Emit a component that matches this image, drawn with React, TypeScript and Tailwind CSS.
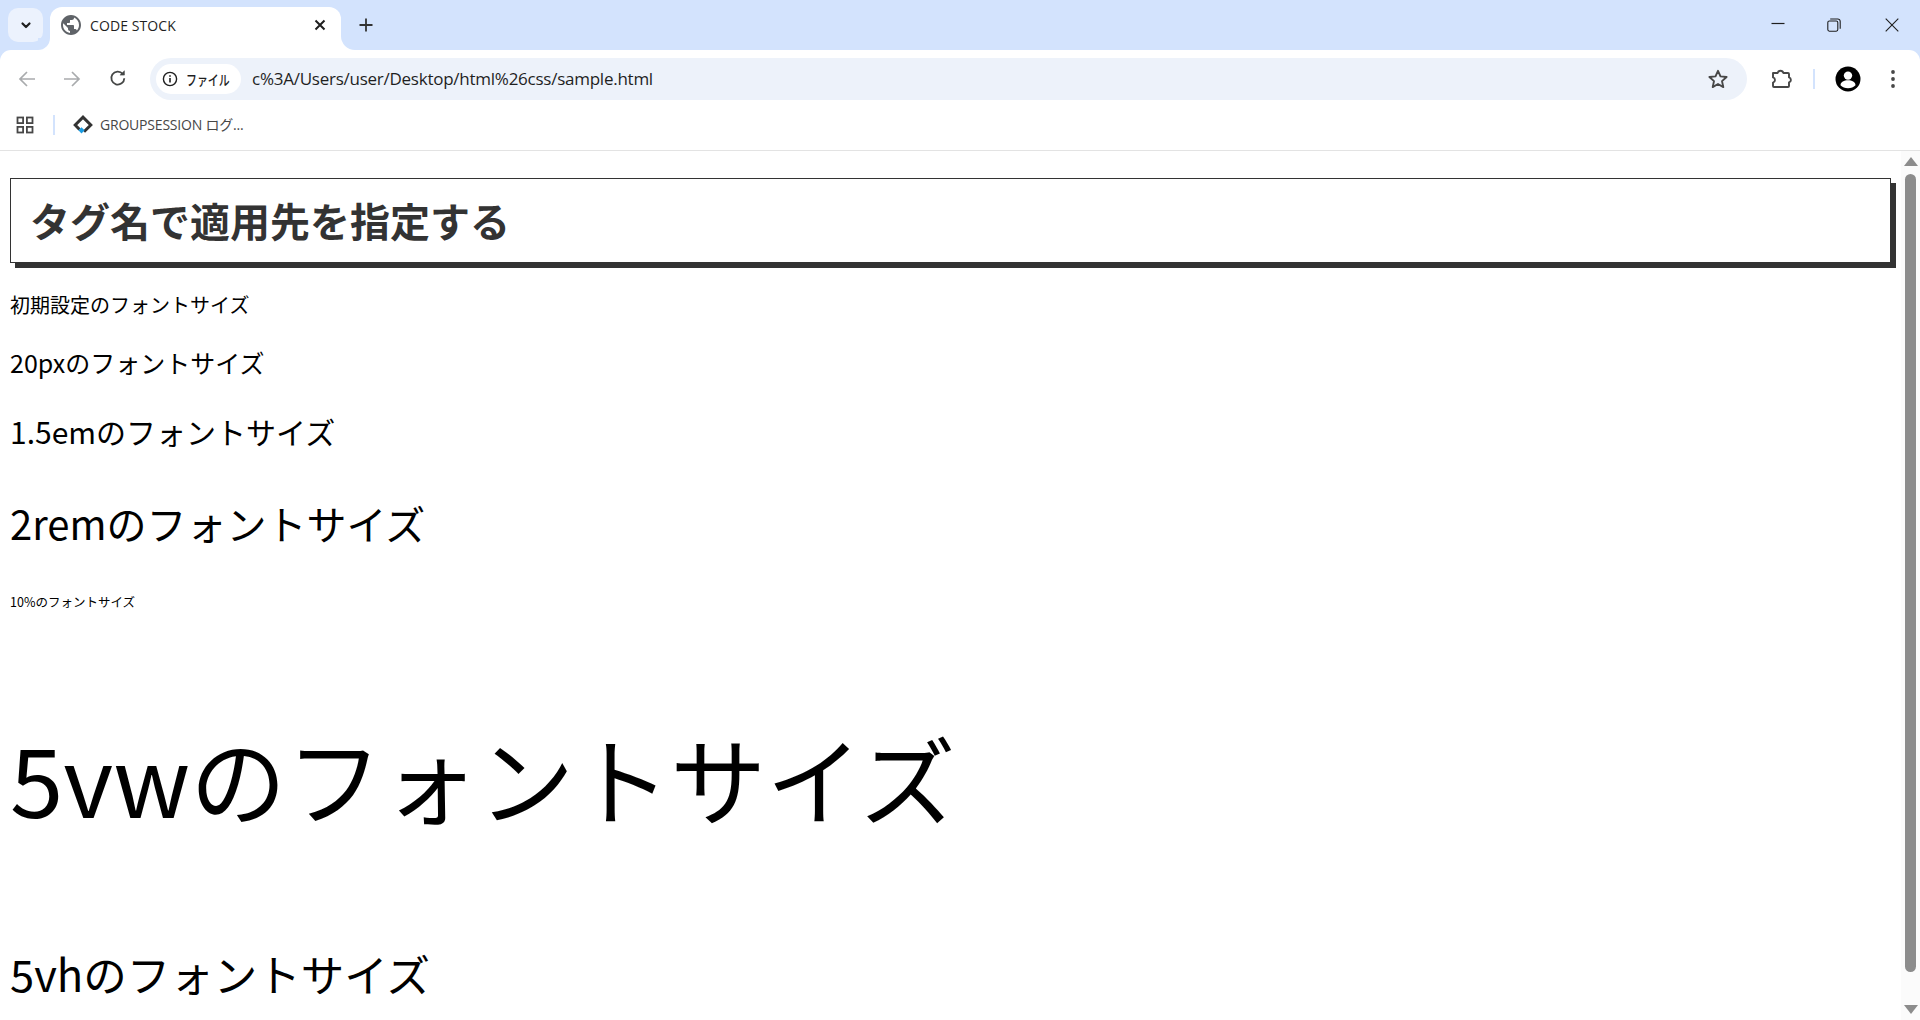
import { MdPublic } from "react-icons/md";

const ui = "font-['Noto_Sans','Noto_Sans_CJK_JP',sans-serif]";

function Chevron() {
  return (
    <svg width="14" height="14" viewBox="0 0 14 14" fill="none" stroke="#1f1f1f" strokeWidth="2.2" strokeLinecap="round" strokeLinejoin="round">
      <path d="M3.5 5.5 7 9l3.5-3.5" />
    </svg>
  );
}

function Arrow({ flip, color }: { flip?: boolean; color: string }) {
  return (
    <svg width="20" height="20" viewBox="0 0 20 20" fill="none" stroke={color} strokeWidth="1.7" className={flip ? "-scale-x-100" : ""}>
      <path d="M18 10H3M10 3l-7 7 7 7" />
    </svg>
  );
}

function App() {
  return (
    <div className="w-[1920px] h-[1020px] overflow-hidden bg-white flex flex-col">
      {/* tab strip */}
      <div className={`h-[50px] shrink-0 bg-[#d3e3fd] flex items-start pl-[8px] ${ui}`}>
        <div className="mt-[8px] w-[35px] h-[34px] rounded-[10px] bg-[#ecf2fd] flex items-center justify-center">
          <Chevron />
        </div>
        <div className="relative mt-[7px] ml-[7px] w-[291px] h-[43px] bg-white rounded-t-[12px] flex items-center pl-[9px] pr-[14px] pb-[7px]">
          <span className="absolute left-[-12px] bottom-0 w-[12px] h-[12px] bg-white">
            <span className="block w-full h-full bg-[#d3e3fd] rounded-br-[12px]" />
          </span>
          <span className="absolute right-[-14px] bottom-0 w-[14px] h-[14px] bg-white">
            <span className="block w-full h-full bg-[#d3e3fd] rounded-bl-[14px]" />
          </span>
          <MdPublic size={24} color="#5f6368" />
          <span className="ml-[7px] text-[14px] text-[#1f1f1f] font-['Open_Sans',sans-serif] tracking-[0.1px]">CODE STOCK</span>
          <svg className="ml-auto" width="14" height="14" viewBox="0 0 14 14" fill="none" stroke="#1f1f1f" strokeWidth="2">
            <path d="M2.5 2.5l9 9M11.5 2.5l-9 9" />
          </svg>
        </div>
        <div className="mt-[16px] ml-[16px]">
          <svg width="18" height="18" viewBox="0 0 18 18" fill="none" stroke="#333" strokeWidth="1.8">
            <path d="M9 2.5v13M2.5 9h13" />
          </svg>
        </div>
        <div className="ml-auto flex items-start">
          <svg className="mt-[18px]" width="14" height="14" viewBox="0 0 14 14" fill="none" stroke="#1f1f1f" strokeWidth="1.2">
            <path d="M0.5 5.5h13" />
          </svg>
          <svg className="mt-[18px] ml-[42px]" width="14" height="14" viewBox="0 0 14 14" fill="none" stroke="#1f1f1f" strokeWidth="1.1">
            <rect x="0.8" y="3" width="10" height="10.2" rx="1.6" />
            <path d="M3.2 1h7.6a2.4 2.4 0 0 1 2.4 2.4v7.4" />
          </svg>
          <svg className="mt-[18px] ml-[44px] mr-[21px]" width="14" height="14" viewBox="0 0 14 14" fill="none" stroke="#1f1f1f" strokeWidth="1.1">
            <path d="M0.7 0.7l12.6 12.6M13.3 0.7 0.7 13.3" />
          </svg>
        </div>
      </div>

      {/* toolbar */}
      <div className={`h-[50px] shrink-0 bg-[#d3e3fd] ${ui}`}>
        <div className="h-full bg-white rounded-t-[11px] flex items-start">
          <div className="w-[54px] h-full flex items-center justify-center pt-[7px]">
            <Arrow color="#a9abad" />
          </div>
          <div className="w-[35px] h-full flex items-center justify-center pt-[7px]">
            <Arrow flip color="#a9abad" />
          </div>
          <div className="w-[57px] h-full flex items-center justify-center pt-[6px] pl-[1px]">
            <svg width="20" height="20" viewBox="0 0 20 20" fill="none" stroke="#454746" strokeWidth="1.8">
              <path d="M16.3 10.2a6.5 6.5 0 1 1-1.6-4.4" />
              <path d="M16.4 2.6v4.5h-4.5" fill="#454746" strokeWidth="0.6" />
            </svg>
          </div>
          <div className="ml-[4px] mt-[8px] w-[1597px] h-[42px] rounded-full bg-[#edf2fa] flex items-center pl-[6px] pr-[18px]">
            <div className="h-[30px] w-[85px] rounded-full bg-white flex items-center pl-[6px]">
              <svg className="shrink-0" width="16" height="16" viewBox="0 0 16 16" fill="none" stroke="#1f1f1f" strokeWidth="1.4">
                <circle cx="8" cy="8" r="6.6" />
                <path d="M8 7v4.4" strokeWidth="1.6" />
                <path d="M8 4.2v1.6" strokeWidth="1.6" />
              </svg>
              <span className="ml-[8px] w-[44px] shrink-0 inline-block origin-left scale-x-[0.78] text-[14px] text-[#1f1f1f] font-['Noto_Sans_CJK_JP',sans-serif] font-medium whitespace-nowrap">ファイル</span>
            </div>
            <span className="ml-[11px] text-[17px] text-[#1f1f1f] font-['Open_Sans',sans-serif] tracking-[-0.25px]">c%3A/Users/user/Desktop/html%26css/sample.html</span>
            <svg className="ml-auto" width="22" height="22" viewBox="0 0 22 22" fill="none" stroke="#474747" strokeWidth="1.9" strokeLinejoin="round">
              <path d="M11 2.8l2.5 5.6 6.1.6-4.6 4.1 1.3 6-5.3-3.1-5.3 3.1 1.3-6L2.4 9l6.1-.6z" />
            </svg>
          </div>
          <div className="h-full w-[173px] flex items-center pt-[7px]">
            <svg className="ml-[23px]" width="22" height="22" viewBox="0 0 22 22" fill="none" stroke="#474747" strokeWidth="1.9" strokeLinejoin="round">
              <path d="M3 5h4.6a3 3 0 0 1 5.8 0H18a1 1 0 0 1 1 1v3.4a2.6 2.6 0 0 1 0 5V18a1 1 0 0 1-1 1H4a1 1 0 0 1-1-1v-3.4a2.7 2.7 0 0 0 0-5.2z" />
            </svg>
            <span className="ml-[21px] w-[2px] h-[20px] bg-[#d3e3fd]" />
            <svg className="ml-[20px]" width="26" height="26" viewBox="0 0 26 26">
              <circle cx="13" cy="13" r="12.5" fill="#000" />
              <circle cx="13" cy="9.6" r="4.2" fill="#fff" />
              <path d="M5.5 19.2c0-3.4 3.6-5 7.5-5s7.5 1.6 7.5 5c-1.8 2-4.5 3-7.5 3s-5.7-1-7.5-3z" fill="#fff" />
            </svg>
            <svg className="ml-[29px]" width="6" height="20" viewBox="0 0 6 20" fill="#474747">
              <circle cx="3" cy="3" r="1.9" />
              <circle cx="3" cy="10" r="1.9" />
              <circle cx="3" cy="17" r="1.9" />
            </svg>
          </div>
        </div>
      </div>

      {/* bookmarks */}
      <div className={`h-[51px] shrink-0 bg-white border-b border-[#e3e3e3] flex items-center pl-[16px] pb-[1px] ${ui}`}>
        <svg width="18" height="18" viewBox="0 0 18 18" fill="none" stroke="#474747" strokeWidth="1.8">
          <rect x="1.5" y="1.5" width="5.6" height="5.6" />
          <rect x="10.9" y="1.5" width="5.6" height="5.6" />
          <rect x="1.5" y="10.9" width="5.6" height="5.6" />
          <rect x="10.9" y="10.9" width="5.6" height="5.6" />
        </svg>
        <span className="ml-[19px] w-[2px] h-[20px] bg-[#d3e3fd]" />
        <svg className="ml-[18px]" width="20" height="20" viewBox="0 0 20 20" fill="none">
          <path d="M6.5 14.5 2.2 10 10 2.2 17.8 10 11 16.8" stroke="#333" strokeWidth="3" />
          <path d="M8.5 12.2 11.6 15.3 8.5 18.4 5.4 15.3z" fill="#1a9be0" />
        </svg>
        <span className="ml-[7px] text-[14px] text-[#474747] font-['Open_Sans','Noto_Sans_CJK_JP',sans-serif] tracking-[-0.2px]">GROUPSESSION ログ...</span>
      </div>

      {/* page */}
      <div className="flex-1 min-h-0 flex font-['Noto_Sans_CJK_JP',sans-serif] text-black leading-[1.448]">
        <div className="flex-1 min-w-0 px-[10px] overflow-hidden">
          <h1 className="mt-[27px] mb-[28px] border border-[#333] shadow-[5px_5px_0_#333] pl-[19px] py-[12.5px] text-[40px] font-bold text-[#333]">タグ名で適用先を指定する</h1>
          <p className="text-[20px] mb-[24px]">初期設定のフォントサイズ</p>
          <p className="text-[25px] mb-[30px]">20pxのフォントサイズ</p>
          <p className="text-[30px] mb-[42px]">1.5emのフォントサイズ</p>
          <p className="text-[40px] mb-[40px]">2remのフォントサイズ</p>
          <p className="text-[12.5px] mb-[96px]">10%のフォントサイズ</p>
          <p className="text-[96px] mb-[96px]">5vwのフォントサイズ</p>
          <p className="text-[43.5px]">5vhのフォントサイズ</p>
        </div>
        <div className="w-[19px] shrink-0 bg-[#fbfbfb] flex flex-col items-center pt-[6px] pb-[6px]">
          <svg width="14" height="9" viewBox="0 0 14 9" fill="#8c8c8c"><path d="M7 0l7 9H0z" /></svg>
          <div className="mt-[8px] w-[11px] h-[798px] rounded-full bg-[#8c8c8c]" />
          <svg className="mt-auto" width="14" height="9" viewBox="0 0 14 9" fill="#8c8c8c"><path d="M7 9 14 0H0z" /></svg>
        </div>
      </div>
    </div>
  );
}

export default App;
